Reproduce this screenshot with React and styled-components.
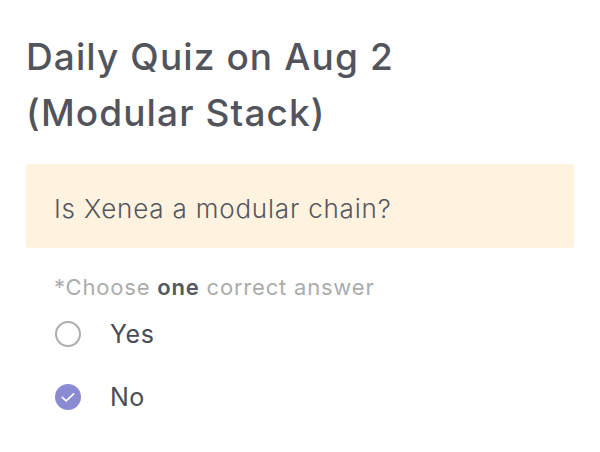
import React, { useState } from 'react'
import styled, { createGlobalStyle } from 'styled-components'

const GlobalStyle = createGlobalStyle`
    html, body {
        margin: 0;
        padding: 0;
        background: #ffffff;
    }
`;

const options = ['Yes', 'No'];

function App() {
    const [picked, setPicked] = useState('No');
    return (
        <>
            <GlobalStyle />
            <QuizStyled>
                <h1>Daily Quiz on Aug 2 (Modular Stack)</h1>
                <div className="question">
                    <p>Is Xenea a modular chain?</p>
                </div>
                <div className="hint">
                    *Choose <b>one</b> correct answer
                </div>
                <ul className="options">
                    {options.map((item) => (
                        <Option key={item} onClick={() => setPicked(item)}>
                            <Radio checked={picked === item}>
                                {picked === item && (
                                    <svg width="16" height="16" viewBox="0 0 16 16">
                                        <path d="M2.3 8.4 L6.2 11.8 L13.6 4.8" fill="none" stroke="#fff" strokeWidth="1.7" strokeLinecap="round" strokeLinejoin="round" />
                                    </svg>
                                )}
                            </Radio>
                            <span>{item}</span>
                        </Option>
                    ))}
                </ul>
            </QuizStyled>
        </>
    )
}

const QuizStyled = styled.div`
    padding: 29px 26px 0 26px;
    font-family: Inter, "Noto Sans", sans-serif;
    h1{
        margin: 0;
        width: 440px;
        font-size: 37px;
        line-height: 56px;
        font-weight: 500;
        color: #52545c;
        letter-spacing: 1.1px;
    }
    .question{
        margin-top: 23px;
        height: 84px;
        background: #fff3df;
        border-radius: 4px;
        display: flex;
        align-items: center;
        padding: 0 28px;
        p{
            margin: 0;
            font-size: 26px;
            font-weight: 300;
            color: #55575e;
            letter-spacing: 0.8px;
            padding-top: 4px;
        }
    }
    .hint{
        margin-top: 26px;
        padding-left: 28px;
        font-size: 22px;
        color: #acacac;
        letter-spacing: 0.8px;
        b{
            font-weight: 600;
            color: #55575e;
        }
    }
    .options{
        list-style: none;
        margin: 15px 0 0 0;
        padding: 0 0 0 29px;
        display: flex;
        flex-direction: column;
        gap: 25px;
    }
`;

const Option = styled.li`
    display: flex;
    align-items: center;
    gap: 29px;
    height: 38px;
    cursor: pointer;
    span{
        font-size: 25px;
        color: #4b4d55;
        letter-spacing: 0.5px;
    }
`;

const Radio = styled.div`
    box-sizing: border-box;
    width: 26px;
    height: 26px;
    border-radius: 50%;
    border: ${props => props.checked ? 'none' : '2px solid #acacac'};
    background: ${props => props.checked ? '#8b8bd3' : '#fff'};
    display: flex;
    align-items: center;
    justify-content: center;
`;

export default App
